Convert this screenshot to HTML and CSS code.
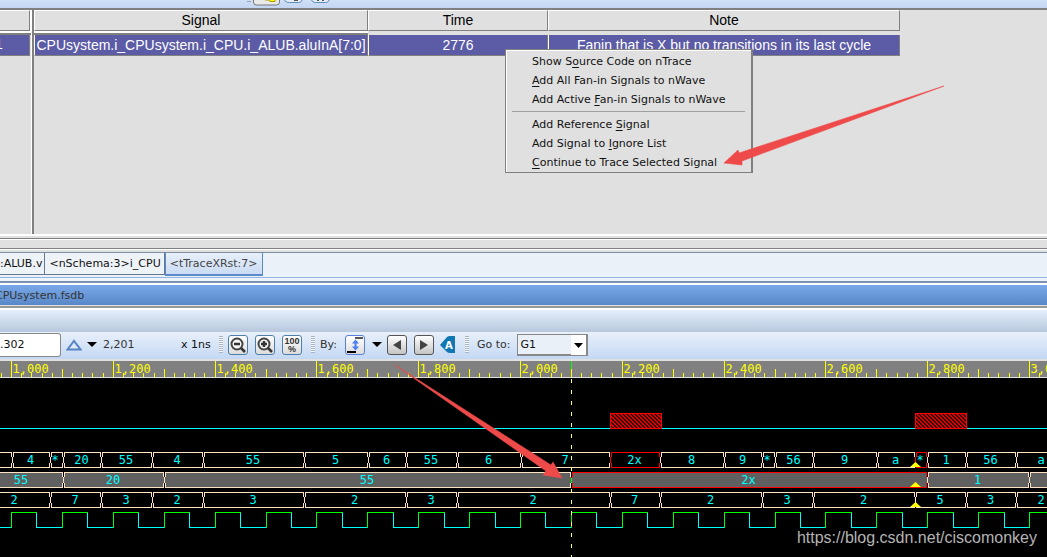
FILE: index.html
```html
<!DOCTYPE html>
<html lang="en">
<head>
<meta charset="utf-8">
<title>CPUsystem.fsdb</title>
<link rel="stylesheet" href="styles.css">
</head>
<body>
<header class="top-strip">
  <svg class="top-icons" width="90" height="8" aria-hidden="true">
    <path d="M0 1.500h4" stroke="#9aa3ad"/>
    <path d="M6.500-2V2q0 3 3 3h20q3 0 3-3V-2z" fill="#e9e9e9" stroke="#777"/>
    <path d="M18 0h4l1 1.500h5V-1" fill="#ff0" stroke="#a90"/>
    <path d="M36.500-3q1 6 6 5.500h9q4 0 4-5" fill="#e4edf5" stroke="#5a8ab0"/>
    <path d="M63.500-3q1 6 6 5.500h9q4 0 4-5" fill="#e4edf5" stroke="#5a8ab0"/>
    <path d="M47 0h4M71 0v1M76 0v1" stroke="#555" stroke-width="2"/>
  </svg>
</header>

<main class="trace">
  <div class="trace-side">
    <div class="side-head"><div class="side-cell"></div></div>
    <div class="side-row">1</div>
  </div>
  <div class="trace-main">
    <table class="signals">
      <colgroup><col class="col-signal"><col class="col-time"><col class="col-note"><col></colgroup>
      <thead><tr><th>Signal</th><th>Time</th><th>Note</th><td class="rest"></td></tr></thead>
      <tbody><tr><td>CPUsystem.i_CPUsystem.i_CPU.i_ALUB.aluInA[7:0]</td><td>2776</td><td>Fanin that is X but no transitions in its last cycle</td><td class="rest"></td></tr></tbody>
    </table>
  </div>
  <div class="menu" role="menu">
    <button role="menuitem">Show S<u>o</u>urce Code on nTrace</button>
    <button role="menuitem"><u>A</u>dd All Fan-in Signals to nWave</button>
    <button role="menuitem">Add Active <u>F</u>an-in Signals to nWave</button>
    <hr>
    <button role="menuitem">Add Reference <u>S</u>ignal</button>
    <button role="menuitem">Add Signal to <u>I</u>gnore List</button>
    <button role="menuitem"><u>C</u>ontinue to Trace Selected Signal</button>
  </div>
</main>

<div class="splitter"></div>

<nav class="tabs">
  <button class="tab tab-first">:ALUB.v</button>
  <button class="tab">&lt;nSchema:3&gt;i_CPU</button>
  <button class="tab tab-on">&lt;tTraceXRst:7&gt;</button>
</nav>

<div class="title"><h1>CPUsystem.fsdb</h1></div>
<div class="menubar"></div>

<div class="tools">
  <input class="cursor-time" aria-label="Cursor time" value=".302">
  <svg class="delta" width="16" height="12" aria-hidden="true"><path d="M1.500 10.500L8 2l6.500 8.500z" fill="#dfe9f6" stroke="#5884c4" stroke-width="2"/></svg>
  <svg class="drop" width="10" height="6" aria-hidden="true"><path d="M0 0h10L5 5z" fill="#000"/></svg>
  <span class="marker">2,201</span>
  <span class="unit">x 1ns</span>
  <i class="grip"></i>
  <button class="tool" aria-label="Zoom out"><svg width="18" height="18"><circle cx="8" cy="8" r="5.500" fill="#f6f6f6" stroke="#444" stroke-width="2"/><path d="M5 8h6M12 12l4 4" stroke="#333" stroke-width="2.500"/></svg></button>
  <button class="tool" aria-label="Zoom in"><svg width="18" height="18"><circle cx="8" cy="8" r="5.500" fill="#f6f6f6" stroke="#444" stroke-width="2"/><path d="M5 8h6M8 5v6M12 12l4 4" stroke="#333" stroke-width="2.500"/></svg></button>
  <button class="tool full"><span>100</span><span>%</span></button>
  <i class="grip"></i>
  <span class="by">By:</span>
  <button class="tool edge" aria-label="Any edge"><svg width="18" height="18"><path d="M9 2h8" stroke="#555" stroke-width="2"/><path d="M1 16h9" stroke="#000" stroke-width="2"/><path d="M9.500 3.500l3.500 4h-2.500v3H13l-3.500 4L6 10.500h2.500v-3H6z" fill="#4a7ef0"/></svg></button>
  <svg class="drop by-drop" width="10" height="6" aria-hidden="true"><path d="M0 0h10L5 5z" fill="#000"/></svg>
  <button class="tool step" aria-label="Previous"><svg width="18" height="18"><path d="M13 4v10L5 9z" fill="#444"/></svg></button>
  <button class="tool step" aria-label="Next"><svg width="18" height="18"><path d="M5 4v10l8-5z" fill="#444"/></svg></button>
  <svg class="tag" width="16" height="18"><path d="M0 9L7 1q1-1 3-1h5v17h-5q-2 0-3-1z" fill="#1177b3"/><text x="5" y="13">A</text></svg>
  <i class="grip"></i>
  <label class="goto" for="goto">Go to:</label>
  <span class="select-wrap"><select id="goto"><option>G1</option></select><svg width="15" height="20" aria-hidden="true"><path d="M3 8h9l-4.500 5z" fill="#000"/></svg></span>
</div>

<section class="waves">
  <svg id="plot" class="plot" role="img" aria-label="Waveforms">
    <defs>
      <pattern id="hatch" width="4" height="4" patternUnits="userSpaceOnUse"><path d="M-1-1l6 6M3-1l2 2M-1 3l2 2" stroke="#f00" stroke-width="1.500"/></pattern>
    </defs>
  </svg>
  <span class="watermark">https://blog.csdn.net/ciscomonkey</span>
</section>

<svg class="arrows" aria-hidden="true">
  <path d="M724 163L738 150 739 153 944 86 742 161 742 165z"/>
  <path d="M395 365L551 465 553 462 562 478 543 475 546 471z"/>
</svg>
<script src="waves.js"></script>
</body>
</html>
```
FILE: styles.css
```css
* { box-sizing: border-box; }
body {
  margin: 0;
  min-height: 100vh;
  display: flex;
  flex-direction: column;
  position: relative;
  overflow: hidden;
  background: #e0e0e0;
  color: #111;
  font: 11px "DejaVu Sans", sans-serif;
}
button { font: inherit; color: inherit; }

.top-strip { height: 8px; padding-left: 247px; background: linear-gradient(#cfdff7, #c3d6f2); }
.top-icons { display: block; }

.trace {
  position: relative;
  display: flex;
  height: 228px;
  border-top: 2px solid #808080;
  border-bottom: 2px solid #fff;
  font: 14px "Liberation Sans", Arial, sans-serif;
}
.trace-side { width: 32px; border-right: 1px solid #fff; }
.side-head { height: 25px; padding-bottom: 1px; border-bottom: 2px solid #808080; background: #fff; }
.side-cell { height: 21px; margin-right: 1px; border: solid #808080; border-width: 0 1px 1px 0; border-top: 1px solid #fff; background: #e0e0e0; }
.side-row { height: 21px; margin-right: 1px; line-height: 19px; background: #5b5ba6; color: #fff; border: solid #808080; border-width: 0 1px 1px 0; text-indent: -5px; }
.trace-main { flex: 1; min-width: 0; border-left: 2px solid #808080; }
.signals { width: 100%; table-layout: fixed; border-collapse: separate; border-spacing: 0; color: #fff; }
.col-signal { width: 334px; }
.col-time { width: 180px; }
.col-note { width: 352px; }
.signals th, .signals td { padding: 0; text-align: center; white-space: nowrap; font-weight: 400; }
.signals th { height: 21px; line-height: 19px; color: #000; border-top: 1px solid #fff; border-left: 1px solid #fff; border-right: 1px solid #808080; border-bottom: 1px solid #808080; }
.signals tbody td { height: 21px; line-height: 20px; background: #5b5ba6; border: solid #808080; border-width: 0 1px 1px 0; border-left: 1px solid #fff; }
.signals tbody::before { content: ""; display: table-row; height: 4px; background: linear-gradient(#fff 2px, #808080 2px); }
.signals .rest { background: none; border: 0; }

.menu {
  position: absolute;
  left: 505px;
  top: 39px;
  width: 248px;
  padding: 2px 0 0;
  border: 1px solid #808080;
  border-right-width: 2px;
  background: #e0e0e0;
  box-shadow: inset 1px 1px #fff;
  font: 11px "DejaVu Sans", sans-serif;
}
.menu button { display: block; width: 100%; height: 19px; padding: 0 0 0 26px; border: 0; background: none; text-align: left; line-height: 19px; }
.menu u { text-underline-offset: 2px; }
.menu hr { height: 1px; margin: 2px 6px 3px; border: 0; background: #a0a0a0; }

.splitter { height: 16px; background: linear-gradient(#e0e0e0 2px, #808080 2px 3px, #fff 3px 4px, #e0e0e0 4px 12px, #808080 12px 13px, #fff 13px 14px, #e0e0e0 14px); }

.tabs { display: flex; align-items: flex-start; height: 29px; padding-bottom: 4px; border-top: 1px solid #7f8fa3; background: linear-gradient(#eaf1f9 24px, #94b4e0 24px 25px, #edf3fa 25px); }
.tab { height: 22px; padding: 0 3px 0 4px; border: 1px solid #66788f; border-width: 0 1px 1px 0; background: #eef3f8; line-height: 20px; white-space: nowrap; }
.tab-first { padding: 0 2px 0 0; }
.tab-on { height: 23px; padding: 0 4px; border: solid #5a8ac8; border-width: 0 1px 2px 1px; background: linear-gradient(#e8f0fa, #c9dbf3); color: #444; }

.title { height: 27px; padding-top: 2px; border-top: 2px solid #7b92b5; border-bottom: 2px solid #999; background: linear-gradient(#fff 2px, #7aa8e8 2px, #5888c8 22px, #e0e0e0 22px); }
.title h1 { margin: 0 0 0 -5px; font-size: 11px; font-weight: 400; line-height: 22px; color: #333; }
.menubar { height: 24px; border-top: 2px solid #fff; background: linear-gradient(#e5effc, #b7c7dc); }

.tools { display: flex; align-items: center; height: 29px; padding-bottom: 2px; border-bottom: 2px solid #e0e0e0; background: linear-gradient(#e8f0fa, #c4d8f4); white-space: nowrap; color: #333; }
.tools > * { flex: none; }
.cursor-time { width: 61px; height: 24px; padding: 0; border: 1px solid #888; border-left: 0; border-radius: 0 3px 3px 0; background: #fff; color: #111; font: inherit; }
.delta { margin-left: 5px; }
.drop { margin-left: 5px; }
.marker { width: 78px; margin-left: 6px; }
.unit { width: 34px; color: #111; }
.grip { width: 4px; height: 17px; margin: 0 5px 0 4px; background: repeating-linear-gradient(#aab4c0 0 1px, #f4f8fc 1px 2px); }
.tool { display: grid; place-items: center; width: 20px; height: 20px; margin-right: 7px; padding: 0; border: 1px solid #4f7fa8; border-radius: 3px; background: linear-gradient(#fff, #dcdcdc); }
.tool svg { display: block; }
.full { align-content: center; font: bold 9px/8px "Liberation Sans", Arial, sans-serif; }
.by { margin: 0 8px 0 -5px; }
.full + .grip { margin-left: 2px; margin-right: 10px; }
.edge { border-color: #5b7fd8; }
.by-drop { margin: 0 5px 0 0; }
.step { border-color: #555; background: linear-gradient(#fff, #c4c4c4); }
.tag { margin: 0 5px 0 -1px; }
.tag text { font: bold 10px "DejaVu Sans", sans-serif; fill: #fff; }
.goto { margin-left: 3px; }
.select-wrap { display: flex; width: 71px; height: 22px; margin-left: 7px; border: 1px solid #888; border-right-width: 2px; border-bottom-width: 2px; background: #e9f0f8; }
.select-wrap select { flex: 1; min-width: 0; appearance: none; padding: 0 2px; border: 0; background: none; color: #111; font: inherit; }
.select-wrap svg { background: #fff; }

.waves { position: relative; flex: 1; min-height: 196px; background: #000; }
.plot { display: block; width: 100%; height: 196px; }
.plot text { font: 12px "DejaVu Sans Mono", monospace; fill: #0ff; text-anchor: middle; }
.plot .time { fill: #ff0; text-anchor: start; }
.watermark { position: absolute; right: 10px; bottom: 8px; font: 16px/22px "Liberation Sans", Arial, sans-serif; color: #b4b4b4; }
.arrows { position: absolute; inset: 0; width: 100%; height: 100%; pointer-events: none; }
.arrows path { fill: #ef4a4a; stroke: #ef4a4a; stroke-width: 0.6; }
```
FILE: waves.js
```js
const plot = document.getElementById("plot");
function add(name, attrs, text) {
  const el = document.createElementNS("http://www.w3.org/2000/svg", name);
  for (const key in attrs) el.setAttribute(key, attrs[key]);
  if (text) el.textContent = text;
  plot.append(el);
}
const line = (d, stroke) => add("path", { d, stroke, fill: "none", "shape-rendering": "crispEdges" });
const xAt = t => Math.round(11 + (t - 1000) * 0.509) + 0.5;
const END = 3080;

// Time ruler
add("rect", { width: "100%", height: 17, fill: "#808080" });
add("rect", { y: 16, width: "100%", height: 1, fill: "#e0e0e0" });
for (let t = 980; t < END; t += 20) {
  const top = t % 200 === 0 ? 0 : t % 100 === 0 ? 8 : 12;
  line(`M${xAt(t)} ${top}V16`, "#ff0");
  if (t % 200 === 0) add("text", { x: xAt(t) + 1, y: 12, class: "time" }, t.toLocaleString("en-US"));
}

// Single-bit signal with unknown spans
line("M0 67.5H4000", "#0ff");
for (const x of [610.5, 915.5]) {
  add("rect", { x, y: 52.5, width: 51, height: 15, fill: "url(#hatch)", stroke: "#f00", "shape-rendering": "crispEdges" });
}

// Bus rows: each cell is [right edge, value, red?, label centre?]
function bus(y, fill, cells) {
  let left = -10;
  for (const [right, value, bad, centre] of cells) {
    const a = left + 0.5, b = right + 0.5;
    const d = `M${a + 1} ${y + 4}V${y}H${b - 1}V${y + 4}L${b} ${y + 5}V${y + 10}L${b - 1} ${y + 11}V${y + 15}H${a + 1}V${y + 11}L${a} ${y + 10}V${y + 5}z`;
    add("path", { d, fill, stroke: bad ? "#f00" : "#ffe4c4", "shape-rendering": "crispEdges" });
    if (value) add("text", { x: centre || (a + b) / 2 - 1, y: y + 11 }, value);
    left = right;
  }
}
bus(91.5, "#000", [[12, ""], [50, "4"], [63, "*", 0, 55], [101, "20"], [152, "55"], [203, "4"], [304, "55"], [368, "5"], [406, "6"], [457, "55"], [521, "6"], [610, "7"], [660, "2x", 1], [724, "8"], [762, "9"], [775, "*", 0, 767], [813, "56"], [877, "9"], [915, "a"], [927, "*", 1, 920], [966, "1"], [1016, "56"], [1067, "a"]]);
bus(111.5, "#606060", [[63, "55", 0, 21], [164, "20"], [571, "55"], [927, "2x", 1], [1029, "1"], [1200, ""]]);
bus(131.5, "#000", [[50, "2", 0, 14], [101, "7"], [152, "3"], [203, "2"], [304, "3"], [406, "2"], [457, "3"], [610, "2"], [660, "7"], [762, "2"], [813, "3"], [915, "2"], [966, "5"], [1016, "3"], [1067, "2"]]);

// Clock
for (let t = 900; t < END; t += 100) {
  const rise = xAt(t), fall = xAt(t + 50), next = xAt(t + 100);
  line(`M${fall} 151.500V166.500H${next}`, "#0ff");
  line(`M${rise} 166.500V151.500H${fall}`, "#0f0");
}

// Markers and cursor
for (const y of [106, 126, 146]) add("path", { d: `M910 ${y}L915.500 ${y - 5}L921 ${y}z`, fill: "#ff0" });
line("M571.5 0V8", "#0f0");
add("path", { d: "M571.500 18V196", stroke: "#ff6", "stroke-dasharray": "4 7" });
line("M571.5 117V122", "#0f0");
```
